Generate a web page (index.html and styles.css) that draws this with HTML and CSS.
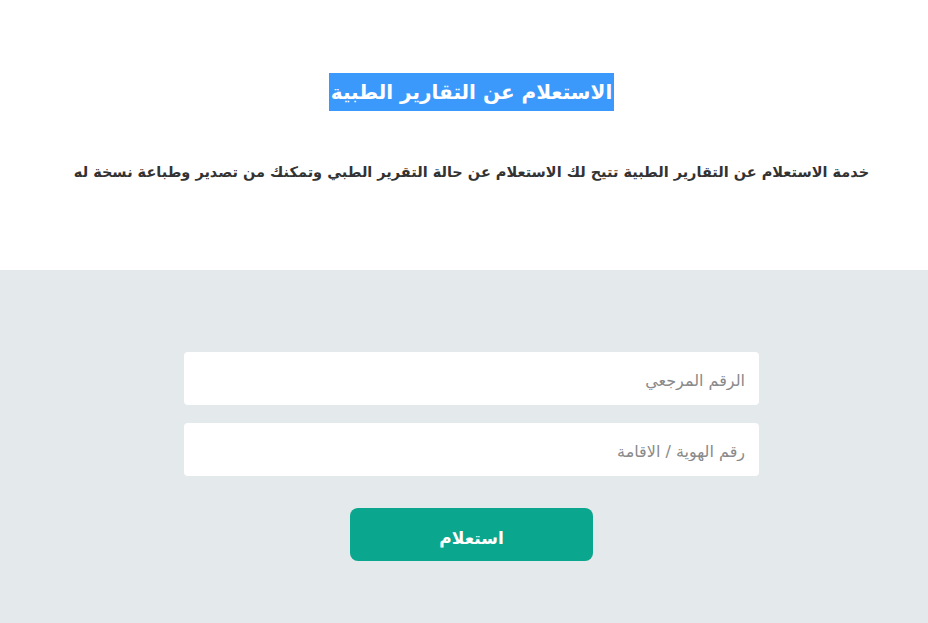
FILE: index.html
```
<!DOCTYPE html>
<html lang="ar" dir="rtl">
<head>
<meta charset="utf-8">
<title>الاستعلام عن التقارير الطبية</title>
<link rel="stylesheet" href="styles.css">
</head>
<body>
<section class="intro">
  <h1 class="title"><span class="title-text">الاستعلام عن التقارير الطبية</span></h1>
  <p class="lead">خدمة الاستعلام عن التقارير الطبية تتيح لك الاستعلام عن حالة التقرير الطبي وتمكنك من تصدير وطباعة نسخة له</p>
</section>
<section class="form-area">
  <form class="form">
    <input class="field" type="text" placeholder="الرقم المرجعي">
    <input class="field" type="text" placeholder="رقم الهوية / الاقامة">
    <button class="submit" type="button">استعلام</button>
  </form>
</section>
</body>
</html>
```
FILE: styles.css
```
html, body {
  margin: 0;
  padding: 0;
  background: #ffffff;
}
body {
  font-family: "DejaVu Sans", "Noto Sans", sans-serif;
  height: 623px;
  overflow: hidden;
}
.intro {
  height: 270px;
  box-sizing: border-box;
  padding: 73px 0 0 15px;
  text-align: center;
}
.title {
  margin: 0;
  font-size: 20px;
  line-height: 38px;
  font-weight: bold;
}
.title-text {
  display: inline-block;
  vertical-align: top;
  background: #3b99fc;
  color: #ffffff;
  padding: 0 2px;
}
.lead {
  margin: 49px 0 0;
  font-size: 14.5px;
  line-height: 24px;
  font-weight: bold;
  color: #333333;
}
.form-area {
  background: #e4e9eb;
  height: 353px;
  box-sizing: border-box;
  padding: 82px 0 0 15px;
}
.form {
  width: 575px;
  margin: 0 auto;
  display: flex;
  flex-direction: column;
  align-items: center;
  gap: 18px;
}
.field {
  width: 100%;
  height: 53px;
  box-sizing: border-box;
  border: none;
  border-radius: 4px;
  background: #ffffff;
  padding: 3px 14px 0;
  font-family: inherit;
  font-size: 16px;
  color: #555;
  outline: none;
}
.field::placeholder {
  color: #8a8a8a;
}
.submit {
  margin-top: 14px;
  width: 243px;
  height: 53px;
  border: none;
  border-radius: 8px;
  background: #0ba68e;
  color: #ffffff;
  font-family: inherit;
  font-size: 17px;
  font-weight: bold;
  padding: 6px 0 0;
}
```
